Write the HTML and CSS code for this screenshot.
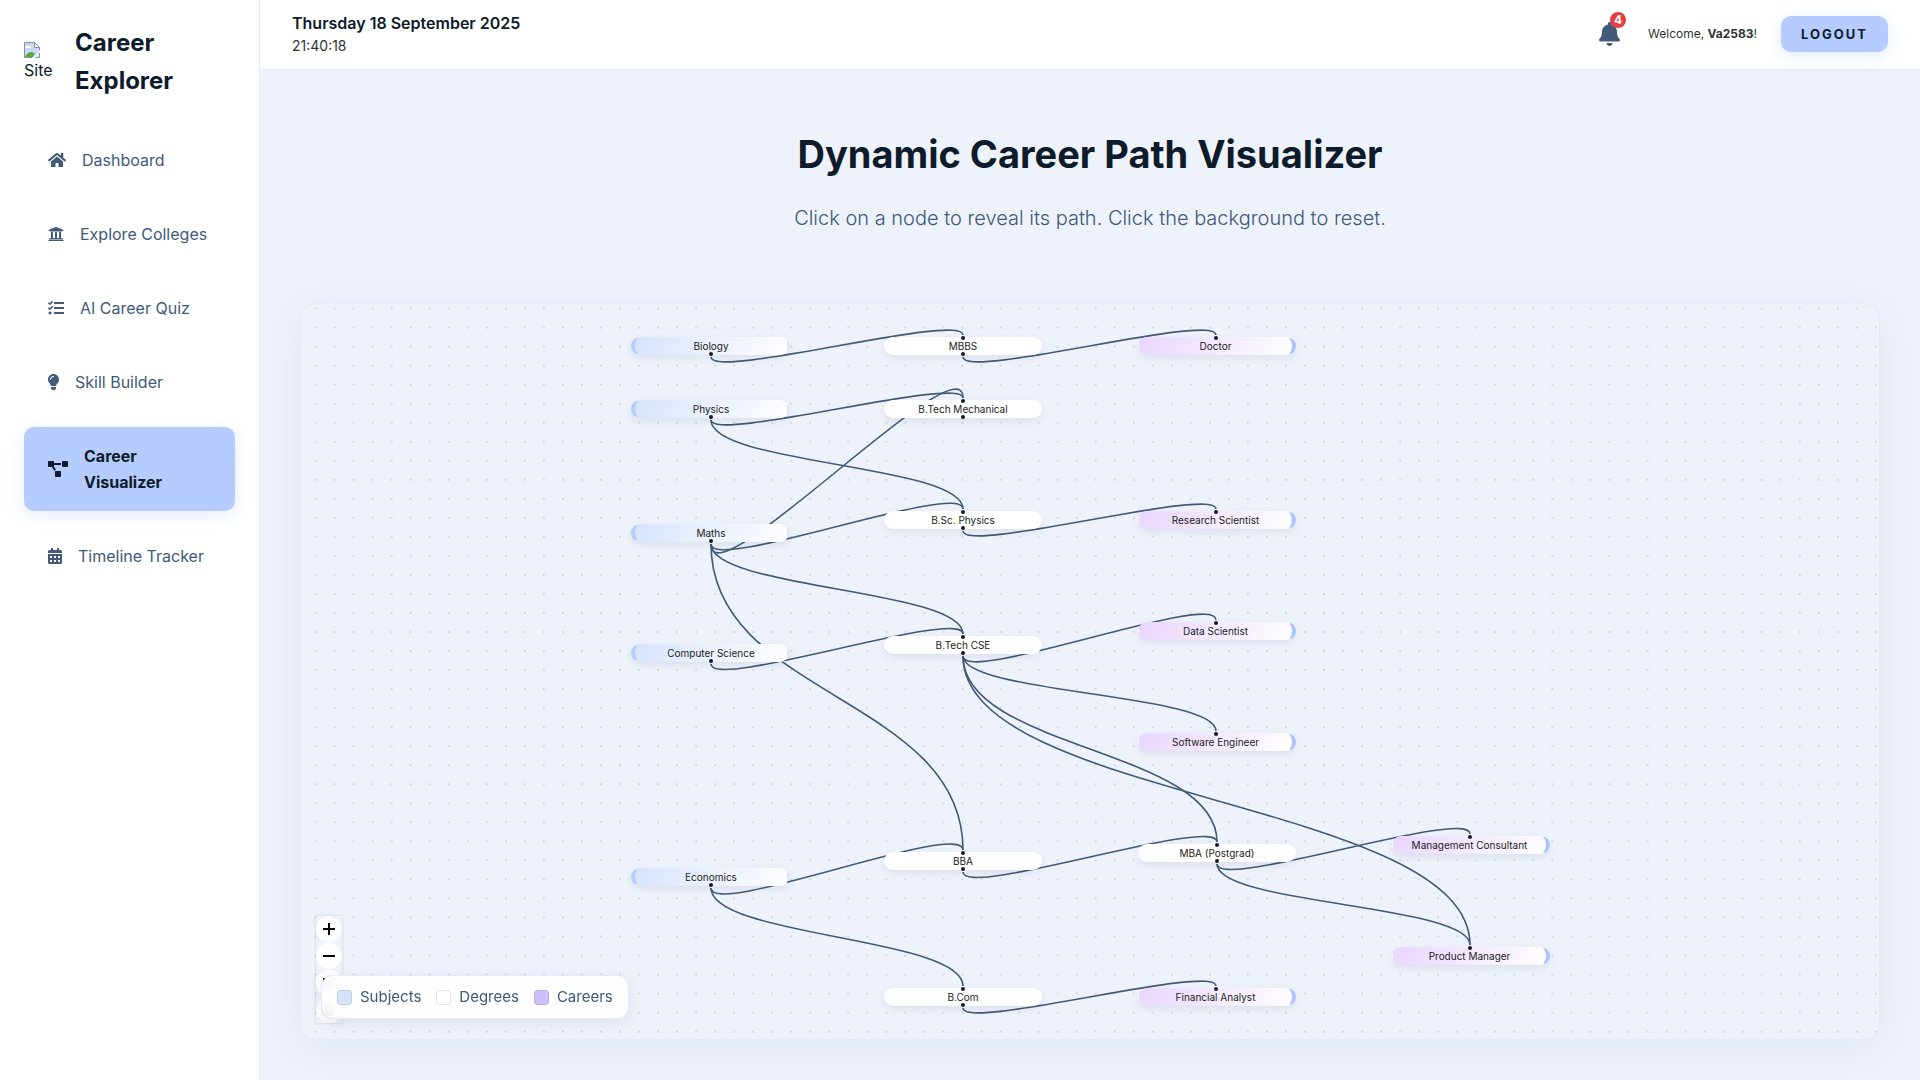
FILE: index.html
```html
<!DOCTYPE html>
<html lang="en">
<head>
  <meta charset="utf-8">
  <meta name="viewport" content="width=device-width, initial-scale=1">
  <title>Career Visualizer</title>
  <link rel="stylesheet" href="styles.css">
</head>
<body>
  <div class="app">
    <aside class="sidebar">
      <div class="brand">
        <div class="brand-logo">
          <svg width="16" height="16" viewBox="0 0 16 16" aria-hidden="true">
            <path d="M.5 .5H10.5L15.500 5.500V9L9 15.500H.5Z" fill="#c6d8f5"/>
            <path d="M1 5.500a2 2 0 0 1 3-1.500 2 2 0 0 1 3 2H1z" fill="#fff"/>
            <path d="M1 15c1-3 4-5 6-5s3 1 4 2l-3 3.500H1z" fill="#5aab3c"/>
            <path d="M15.500 9.500V15.500H10z" fill="#dfe8f5"/>
            <path d="M10.500 .5V5.500H15.500" fill="#fff" stroke="#8f8f8f"/>
            <path d="M15.500 5.500V8M8 15.500H.5V.5H10.500L15.500 5.500M15.500 11V15.500H12" fill="none" stroke="#8f8f8f"/>
          </svg>
          <span>Site</span>
        </div>
        <h2 class="brand-name">Career Explorer</h2>
      </div>
      <nav class="nav">
        <a class="nav-link" href="#dashboard">
          <svg width="18" height="16" viewBox="0 0 576 512" aria-hidden="true"><path d="M280.37 148.26L96 300.11V464a16 16 0 0 0 16 16l112.06-.29a16 16 0 0 0 15.92-16V368a16 16 0 0 1 16-16h64a16 16 0 0 1 16 16v95.64a16 16 0 0 0 16 16.05L464 480a16 16 0 0 0 16-16V300L295.67 148.26a12.19 12.19 0 0 0-15.3 0zM571.6 251.47L488 182.56V44.05a12 12 0 0 0-12-12h-56a12 12 0 0 0-12 12v72.61L318.47 43a48 48 0 0 0-61 0L4.34 251.47a12 12 0 0 0-1.6 16.9l25.5 31A12 12 0 0 0 45.15 301l235.22-193.74a12.19 12.19 0 0 1 15.3 0L530.9 301a12 12 0 0 0 16.9-1.6l25.5-31a12 12 0 0 0-1.7-16.93z"/></svg>
          <span>Dashboard</span>
        </a>
        <a class="nav-link" href="#colleges">
          <svg width="16" height="16" viewBox="0 0 512 512" aria-hidden="true"><path d="M496 128v16a8 8 0 0 1-8 8h-24v12c0 6.627-5.373 12-12 12H60c-6.627 0-12-5.373-12-12v-12H24a8 8 0 0 1-8-8v-16a8 8 0 0 1 4.941-7.392l232-88a7.996 7.996 0 0 1 6.118 0l232 88A8 8 0 0 1 496 128zm-24 304H40c-13.255 0-24 10.745-24 24v16a8 8 0 0 0 8 8h464a8 8 0 0 0 8-8v-16c0-13.255-10.745-24-24-24zM96 192v192H60c-6.627 0-12 5.373-12 12v20h416v-20c0-6.627-5.373-12-12-12h-36V192h-64v192h-64V192h-64v192h-64V192H96z"/></svg>
          <span>Explore Colleges</span>
        </a>
        <a class="nav-link" href="#quiz">
          <svg width="16" height="16" viewBox="0 0 512 512" aria-hidden="true"><path d="M139.61 35.5a12 12 0 0 0-17 0L58.93 98.81l-22.7-22.12a12 12 0 0 0-17 0L3.53 92.41a12 12 0 0 0 0 17l47.59 47.4a12.78 12.78 0 0 0 17.61 0l15.59-15.62L156.52 69a12.09 12.09 0 0 0 .09-17zm0 159.19a12 12 0 0 0-17 0l-63.68 63.72-22.7-22.1a12 12 0 0 0-17 0L3.53 252a12 12 0 0 0 0 17L51 316.5a12.77 12.77 0 0 0 17.6 0l15.7-15.69 72.2-72.22a12 12 0 0 0 .09-16.9zM64 368c-26.49 0-48.59 21.5-48.59 48S37.53 464 64 464a48 48 0 0 0 0-96zm432 16H208a16 16 0 0 0-16 16v32a16 16 0 0 0 16 16h288a16 16 0 0 0 16-16v-32a16 16 0 0 0-16-16zm0-320H208a16 16 0 0 0-16 16v32a16 16 0 0 0 16 16h288a16 16 0 0 0 16-16V80a16 16 0 0 0-16-16zm0 160H208a16 16 0 0 0-16 16v32a16 16 0 0 0 16 16h288a16 16 0 0 0 16-16v-32a16 16 0 0 0-16-16z"/></svg>
          <span>AI Career Quiz</span>
        </a>
        <a class="nav-link" href="#skills">
          <svg width="11" height="16" viewBox="0 0 352 512" aria-hidden="true"><path d="M96.06 454.35c.01 6.29 1.87 12.45 5.36 17.69l17.09 25.69a31.99 31.99 0 0 0 26.64 14.28h61.71a31.99 31.99 0 0 0 26.64-14.28l17.09-25.69a31.989 31.989 0 0 0 5.36-17.69l.04-38.35H96.01l.05 38.35zM0 176c0 44.37 16.45 84.85 43.56 115.78 16.52 18.85 42.36 58.23 52.21 91.45.04.26.07.52.11.78h160.24c.04-.26.07-.51.11-.78 9.85-33.22 35.69-72.6 52.21-91.45C335.55 260.85 352 220.37 352 176 352 78.61 272.91-.3 175.45 0 73.44.31 0 82.97 0 176zm176-80c-44.11 0-80 35.89-80 80 0 8.84-7.16 16-16 16s-16-7.16-16-16c0-61.76 50.24-112 112-112 8.84 0 16 7.16 16 16s-7.16 16-16 16z"/></svg>
          <span>Skill Builder</span>
        </a>
        <a class="nav-link active" href="#visualizer" aria-current="page">
          <svg width="20" height="16" viewBox="0 0 640 512" aria-hidden="true"><path d="M384 320H256c-17.67 0-32 14.33-32 32v128c0 17.67 14.33 32 32 32h128c17.67 0 32-14.33 32-32V352c0-17.67-14.33-32-32-32zM192 32c0-17.67-14.33-32-32-32H32C14.33 0 0 14.33 0 32v128c0 17.67 14.33 32 32 32h95.72l73.16 128.04C211.98 300.98 232.4 288 256 288h.28L192 175.51V128h224V64H192V32zM608 0H480c-17.67 0-32 14.33-32 32v128c0 17.67 14.33 32 32 32h128c17.67 0 32-14.33 32-32V32c0-17.67-14.33-32-32-32z"/></svg>
          <span>Career Visualizer</span>
        </a>
        <a class="nav-link" href="#timeline">
          <svg width="14" height="16" viewBox="0 0 448 512" aria-hidden="true"><path fill-rule="evenodd" d="M0 464c0 26.500 21.500 48 48 48h352c26.500 0 48-21.500 48-48V192H0zM64 256h64v64H64zM192 256h64v64h-64zM320 256h64v64h-64zM64 384h64v64H64zM192 384h64v64h-64zM320 384h64v64h-64zM400 64h-48V16c0-8.800-7.200-16-16-16h-32c-8.800 0-16 7.200-16 16v48H160V16c0-8.800-7.200-16-16-16h-32c-8.800 0-16 7.200-16 16v48H48C21.500 64 0 85.500 0 112v48h448v-48c0-26.500-21.500-48-48-48z"/></svg>
          <span>Timeline Tracker</span>
        </a>
      </nav>
    </aside>

    <div class="page">
      <header class="topbar">
        <div class="clock">
          <div class="date">Thursday 18 September 2025</div>
          <div class="time">21:40:18</div>
        </div>
        <div class="account">
          <button class="bell" type="button" aria-label="Notifications">
            <svg width="21" height="24" viewBox="0 0 448 512" aria-hidden="true"><path d="M224 512c35.32 0 63.97-28.65 63.97-64H160.03c0 35.35 28.65 64 63.97 64zm215.39-149.71c-19.32-20.76-55.47-51.99-55.47-154.29 0-77.7-54.48-139.9-127.94-155.16V32c0-17.67-14.32-32-31.98-32s-31.98 14.33-31.98 32v20.84C118.56 68.1 64.08 130.3 64.08 208c0 102.3-36.15 133.53-55.47 154.29-6 6.45-8.66 14.16-8.61 21.71.11 16.4 12.98 32 32.1 32h383.8c19.12 0 32-15.6 32.1-32 .05-7.55-2.61-15.27-8.61-21.71z"/></svg>
            <span class="badge">4</span>
          </button>
          <div class="welcome">Welcome, <strong>Va2583</strong>!</div>
          <button class="logout" type="button">LOGOUT</button>
        </div>
      </header>

      <main class="main">
        <div class="heading">
          <h1>Dynamic Career Path Visualizer</h1>
          <p>Click on a node to reveal its path. Click the background to reset.</p>
        </div>
        <section class="canvas" aria-label="Career path graph">
          <svg class="dots" aria-hidden="true">
            <defs>
              <pattern id="dot-grid" width="30" height="30" patternUnits="userSpaceOnUse" patternTransform="translate(5 -5) scale(0.6343)">
                <circle cx="15" cy="15" r="1" fill="#9aa3b5"/>
              </pattern>
            </defs>
            <rect width="100%" height="100%" fill="url(#dot-grid)"/>
          </svg>
          <div class="stage" id="stage">
            <svg class="edges" id="edges" aria-hidden="true"></svg>
          </div>
          <div class="controls">
            <button type="button" aria-label="Zoom in"><svg width="12" height="12" viewBox="0 0 12 12"><path d="M5 0h2v5h5v2H7v5H5V7H0V5h5z"/></svg></button>
            <button type="button" aria-label="Zoom out"><svg width="12" height="12" viewBox="0 0 12 12"><path d="M0 5h12v2H0z"/></svg></button>
            <button type="button" aria-label="Fit view"><svg width="12" height="12" viewBox="0 0 12 12"><path d="M0 1h4v1H1v3H0zM8 1h4v4h-1V2H8zM0 7h1v3h3v1H0zM11 7h1v4H8v-1h3zM3 4h6v4H3z"/></svg></button>
            <button type="button" aria-label="Lock"><svg width="12" height="12" viewBox="0 0 12 12"><path d="M3 5V3a3 3 0 0 1 6 0H8a2 2 0 0 0-4 0v2h6v7H2V5z"/></svg></button>
          </div>
          <ul class="legend">
            <li><span class="swatch subject"></span>Subjects</li>
            <li><span class="swatch degree"></span>Degrees</li>
            <li><span class="swatch career"></span>Careers</li>
          </ul>
        </section>
      </main>
    </div>
  </div>
  <script src="graph.js"></script>
</body>
</html>
```

FILE: styles.css
```css
* {
  box-sizing: border-box;
}

body {
  margin: 0;
  background: #edf2fb;
  color: #0d1b2a;
  font-family: Inter, "Open Sans", sans-serif;
  font-size: 16px;
  line-height: 26px;
}

button {
  font-family: inherit;
  border: 0;
  padding: 0;
  cursor: pointer;
}

.app {
  display: flex;
  min-height: 100vh;
}

/* Sidebar */

.sidebar {
  flex: 0 0 260px;
  padding: 24px;
  background: #fff;
  border-right: 1px solid #e2eafc;
}

.brand {
  display: flex;
  align-items: center;
  gap: 16px;
  margin-bottom: 31px;
}

.brand-logo {
  display: flex;
  flex: 0 0 35px;
  flex-direction: column;
}

.brand-logo span {
  line-height: 24px;
}

.brand-name {
  margin: 0;
  font-size: 24px;
  font-weight: 700;
  line-height: 38px;
}

.nav {
  display: flex;
  flex-direction: column;
  gap: 16px;
}

.nav-link {
  display: flex;
  align-items: center;
  gap: 16px;
  padding: 16px 24px;
  border-radius: 10px;
  color: #415a77;
  text-decoration: none;
}

.nav-link svg {
  flex: none;
  fill: currentColor;
}

.nav-link.active {
  background: #b6ccfe;
  box-shadow: 0 4px 15px rgba(182, 204, 254, 0.4);
  color: #0d1b2a;
  font-weight: 700;
}

/* Top bar */

.page {
  display: flex;
  flex: 1;
  flex-direction: column;
  min-width: 0;
}

.topbar {
  display: flex;
  align-items: center;
  justify-content: space-between;
  min-height: 70px;
  padding: 0 32px 2px;
  background: #fff;
  border-bottom: 1px solid #e2eafc;
}

.date {
  font-weight: 600;
  line-height: 24px;
}

.time {
  color: #333;
  font-size: 14px;
  line-height: 22px;
}

.account {
  display: flex;
  align-items: center;
  gap: 24px;
}

.bell {
  position: relative;
  display: flex;
  margin-right: 4px;
  background: none;
}

.bell svg {
  fill: #415a77;
}

.badge {
  position: absolute;
  top: -10px;
  right: -6px;
  width: 16px;
  height: 16px;
  border-radius: 50%;
  background: #e53e3e;
  color: #fff;
  font-size: 12px;
  font-weight: 700;
  line-height: 16px;
  text-align: center;
}

.welcome {
  color: #333;
  font-size: 12px;
}

.logout {
  height: 36px;
  padding: 0 20px;
  border-radius: 10px;
  background: #b6ccfe;
  box-shadow: 0 4px 15px rgba(182, 204, 254, 0.4);
  color: #0d1b2a;
  font-size: 13px;
  font-weight: 700;
  letter-spacing: 2px;
}

/* Main area */

.main {
  display: flex;
  flex: 1;
  flex-direction: column;
  padding: 55px 40px 40px;
}

.heading {
  margin-bottom: 70px;
  text-align: center;
}

.heading h1 {
  margin: 0 0 20px;
  font-size: 38px;
  font-weight: 700;
  line-height: 58px;
}

.heading p {
  margin: 0;
  color: #415a77;
  font-size: 20px;
  font-weight: 300;
  line-height: 30px;
}

.canvas {
  position: relative;
  display: grid;
  flex: 1;
  place-items: center;
  overflow: hidden;
  border: 1px solid #e2eafc;
  border-radius: 16px;
  box-shadow: 0 8px 40px rgba(13, 27, 42, 0.06);
}

.dots {
  position: absolute;
  inset: 0;
  width: 100%;
  height: 100%;
}

.stage {
  position: relative;
  width: 920px;
  height: 672px;
}

.edges {
  position: absolute;
  inset: 0;
  width: 100%;
  height: 100%;
  overflow: visible;
}

.edges path {
  fill: none;
  stroke: #415a77;
  stroke-width: 1.6;
}

.node {
  position: absolute;
  width: 158px;
  height: 18px;
  border: 1px solid transparent;
  border-radius: 9px;
  background: #fff;
  box-shadow: 0 3px 8px rgba(13, 27, 42, 0.08);
  color: #222;
  font-size: 10px;
  line-height: 16px;
  text-align: center;
}

.node.subject {
  border-right-width: 2px;
  border-left: 4px solid #b6ccfe;
  background: linear-gradient(135deg, #d7e3fc, #fff);
}

.node.career {
  border-right: 4px solid #abc4ff;
  background: linear-gradient(135deg, #e9d5ff, #fff);
}

.node.source::after,
.node.target::before {
  position: absolute;
  left: calc(50% - 2px);
  width: 4px;
  height: 4px;
  border-radius: 50%;
  background: #1a192b;
  content: "";
}

.node.target::before {
  top: -2px;
}

.node.source::after {
  bottom: -2px;
}

.controls {
  position: absolute;
  bottom: 16px;
  left: 15px;
  display: flex;
  flex-direction: column;
  gap: 1px;
  box-shadow: 0 0 2px 1px rgba(0, 0, 0, 0.08);
}

.controls button {
  display: grid;
  place-items: center;
  width: 26px;
  height: 26px;
  border-radius: 50%;
  background: #fefefe;
}

.legend {
  position: absolute;
  bottom: 20px;
  left: 20px;
  display: flex;
  gap: 15px;
  margin: 0;
  padding: 8px 15px;
  border: 1px solid #e2eafc;
  border-radius: 12px;
  background: rgba(255, 255, 255, 0.9);
  backdrop-filter: blur(5px);
  box-shadow: 0 4px 15px rgba(13, 27, 42, 0.08);
  color: #415a77;
  font-size: 15px;
  list-style: none;
}

.legend li {
  display: flex;
  align-items: center;
  gap: 8px;
}

.swatch {
  width: 15px;
  height: 15px;
  border: 1px solid rgba(0, 0, 0, 0.1);
  border-radius: 4px;
}

.swatch.subject {
  background: #d7e3fc;
}

.swatch.degree {
  background: #fff;
}

.swatch.career {
  background: #d0bfff;
}
```

FILE: graph.js
```js
const NODE_WIDTH = 158;
const NODE_HEIGHT = 18;
const HANDLE_GAP = 2;
const ZOOM = 0.6343;
const COLUMNS = [1, 254, 508, 762];

// id: [label, type, column, top]
const nodes = {
  biology: ["Biology", "subject", 0, 1],
  physics: ["Physics", "subject", 0, 64],
  maths: ["Maths", "subject", 0, 188],
  cs: ["Computer Science", "subject", 0, 308],
  economics: ["Economics", "subject", 0, 532],
  mbbs: ["MBBS", "degree", 1, 1],
  mech: ["B.Tech Mechanical", "degree", 1, 64],
  bsc: ["B.Sc. Physics", "degree", 1, 175],
  btech: ["B.Tech CSE", "degree", 1, 300],
  bba: ["BBA", "degree", 1, 516],
  bcom: ["B.Com", "degree", 1, 652],
  mba: ["MBA (Postgrad)", "degree", 2, 508],
  doctor: ["Doctor", "career", 2, 1],
  research: ["Research Scientist", "career", 2, 175],
  data: ["Data Scientist", "career", 2, 286],
  software: ["Software Engineer", "career", 2, 397],
  analyst: ["Financial Analyst", "career", 2, 652],
  consultant: ["Management Consultant", "career", 3, 500],
  product: ["Product Manager", "career", 3, 611]
};

const edges = [
  ["biology", "mbbs"], ["mbbs", "doctor"],
  ["physics", "mech"], ["physics", "bsc"],
  ["maths", "mech"], ["maths", "bsc"], ["maths", "btech"], ["maths", "bba"],
  ["cs", "btech"], ["bsc", "research"],
  ["btech", "data"], ["btech", "software"], ["btech", "mba"], ["btech", "product"],
  ["economics", "bba"], ["economics", "bcom"],
  ["bba", "mba"], ["mba", "consultant"], ["mba", "product"],
  ["bcom", "analyst"]
];

const stage = document.getElementById("stage");
const layer = document.getElementById("edges");

for (const [label, type, column, top] of Object.values(nodes)) {
  const el = document.createElement("div");
  el.className = "node " + type;
  if (type !== "career") el.classList.add("source");
  if (type !== "subject") el.classList.add("target");
  el.style.left = COLUMNS[column] + "px";
  el.style.top = top + "px";
  el.textContent = label;
  stage.append(el);
}

// Handles sit in the middle of the area inside the accent border.
const ACCENT_SHIFT = { subject: 1, degree: 0, career: -1 };
const centre = ([, type, column]) => COLUMNS[column] + NODE_WIDTH / 2 + ACCENT_SHIFT[type];

for (const [from, to] of edges) {
  const sx = centre(nodes[from]);
  const sy = nodes[from][3] + NODE_HEIGHT + HANDLE_GAP;
  const tx = centre(nodes[to]);
  const ty = nodes[to][3] - HANDLE_GAP;
  const distance = ty - sy;
  const bend = distance >= 0
    ? distance / 2
    : 6.25 * ZOOM * Math.sqrt(-distance / ZOOM);
  const path = document.createElementNS("http://www.w3.org/2000/svg", "path");
  path.setAttribute("d", `M${sx} ${sy}C${sx} ${sy + bend} ${tx} ${ty - bend} ${tx} ${ty}`);
  layer.append(path);
}
```
